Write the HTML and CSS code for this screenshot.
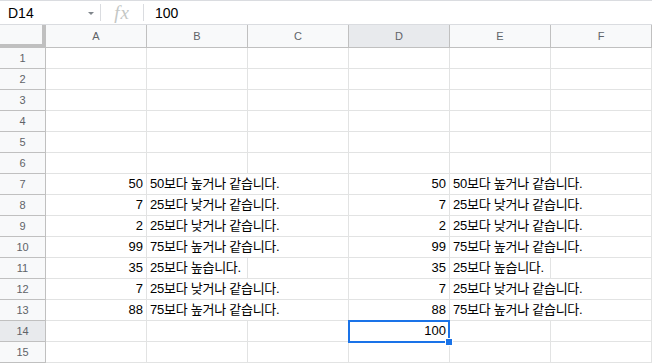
FILE: index.html
```html
<!DOCTYPE html>
<html>
<head>
<meta charset="utf-8">
<link rel="stylesheet" href="styles.css">
</head>
<body>
<div class="fbar">
  <div class="namebox"><span class="ref">D14</span><span class="caret"></span></div>
  <div class="sep"></div>
  <div class="fx">fx</div>
  <div class="sep"></div>
  <div class="fval">100</div>
</div>
<div class="grid">
  <div class="corner"></div>
  <div class="ch">A</div><div class="ch">B</div><div class="ch">C</div><div class="ch sel">D</div><div class="ch">E</div><div class="ch">F</div>

  <div class="rh">1</div><div class="c"></div><div class="c"></div><div class="c"></div><div class="c"></div><div class="c"></div><div class="c"></div>
  <div class="rh">2</div><div class="c"></div><div class="c"></div><div class="c"></div><div class="c"></div><div class="c"></div><div class="c"></div>
  <div class="rh">3</div><div class="c"></div><div class="c"></div><div class="c"></div><div class="c"></div><div class="c"></div><div class="c"></div>
  <div class="rh">4</div><div class="c"></div><div class="c"></div><div class="c"></div><div class="c"></div><div class="c"></div><div class="c"></div>
  <div class="rh">5</div><div class="c"></div><div class="c"></div><div class="c"></div><div class="c"></div><div class="c"></div><div class="c"></div>
  <div class="rh">6</div><div class="c"></div><div class="c"></div><div class="c"></div><div class="c"></div><div class="c"></div><div class="c"></div>

  <div class="rh">7</div><div class="c num">50</div><div class="c txt span2">50보다 높거나 같습니다.</div><div class="c num">50</div><div class="c txt span2">50보다 높거나 같습니다.</div>
  <div class="rh">8</div><div class="c num">7</div><div class="c txt span2">25보다 낮거나 같습니다.</div><div class="c num">7</div><div class="c txt span2">25보다 낮거나 같습니다.</div>
  <div class="rh">9</div><div class="c num">2</div><div class="c txt span2">25보다 낮거나 같습니다.</div><div class="c num">2</div><div class="c txt span2">25보다 낮거나 같습니다.</div>
  <div class="rh">10</div><div class="c num">99</div><div class="c txt span2">75보다 높거나 같습니다.</div><div class="c num">99</div><div class="c txt span2">75보다 높거나 같습니다.</div>
  <div class="rh">11</div><div class="c num">35</div><div class="c txt">25보다 높습니다.</div><div class="c"></div><div class="c num">35</div><div class="c txt">25보다 높습니다.</div><div class="c"></div>
  <div class="rh">12</div><div class="c num">7</div><div class="c txt span2">25보다 낮거나 같습니다.</div><div class="c num">7</div><div class="c txt span2">25보다 낮거나 같습니다.</div>
  <div class="rh">13</div><div class="c num">88</div><div class="c txt span2">75보다 높거나 같습니다.</div><div class="c num">88</div><div class="c txt span2">75보다 높거나 같습니다.</div>
  <div class="rh sel">14</div><div class="c"></div><div class="c"></div><div class="c"></div><div class="c num active">100<span class="handle"></span></div><div class="c"></div><div class="c"></div>
  <div class="rh">15</div><div class="c"></div><div class="c"></div><div class="c"></div><div class="c"></div><div class="c"></div><div class="c"></div>
</div>
</body>
</html>
```
FILE: styles.css
```css
html, body {
  margin: 0;
  padding: 0;
  background: #fff;
  overflow: hidden;
}
body {
  width: 652px;
  height: 364px;
  font-family: "Liberation Sans", Arial, "Noto Sans CJK KR", sans-serif;
  color: #000;
}
.fbar {
  height: 23px;
  border-top: 1px solid #dadce0;
  border-bottom: 1px solid #dadce0;
  display: flex;
  align-items: center;
}
.namebox {
  width: 100px;
  display: flex;
  align-items: center;
  justify-content: space-between;
  padding: 0 6px 0 8px;
  box-sizing: border-box;
  font-size: 14px;
}
.caret {
  width: 0;
  height: 0;
  border-left: 3px solid transparent;
  border-right: 3px solid transparent;
  border-top: 3px solid #80868b;
  margin-top: 1px;
}
.sep {
  width: 1px;
  height: 17px;
  background: #dadce0;
}
.fx {
  width: 42px;
  text-align: center;
  font-family: "Liberation Serif", "DejaVu Serif", serif;
  font-style: italic;
  font-size: 19px;
  color: #c4c7c5;
  line-height: 23px;
  letter-spacing: 1px;
}
.fval {
  padding-left: 11px;
  font-size: 14px;
}
.grid {
  display: grid;
  grid-template-columns: 46px repeat(6, 101px);
  grid-template-rows: 23px repeat(15, 21px);
}
.corner {
  background: #f8f9fa;
  border-right: 4px solid #c0c0c0;
  border-bottom: 4px solid #c0c0c0;
  box-sizing: border-box;
}
.ch {
  background: #f8f9fa;
  border-right: 1px solid #c0c0c0;
  border-bottom: 1px solid #c0c0c0;
  box-sizing: border-box;
  color: #5f6368;
  font-size: 11px;
  display: flex;
  align-items: center;
  justify-content: center;
}
.ch.sel, .rh.sel {
  background: #e8eaed;
}
.rh {
  background: #f8f9fa;
  border-right: 1px solid #c0c0c0;
  border-bottom: 1px solid #c0c0c0;
  box-sizing: border-box;
  color: #5f6368;
  font-size: 11px;
  display: flex;
  align-items: center;
  justify-content: center;
}
.c {
  border-right: 1px solid #e2e3e3;
  border-bottom: 1px solid #e2e3e3;
  box-sizing: border-box;
  font-size: 13px;
  line-height: 20px;
  padding: 0 3px;
  white-space: nowrap;
  position: relative;
}
.num {
  text-align: right;
}
.txt {
  letter-spacing: -0.25px;
}
.span2 {
  grid-column: span 2;
}
.active {
  border: 2px solid #1a73e8;
  margin: -1px 0 -1px -1px;
  line-height: 18px;
  padding-right: 2px;
  z-index: 2;
}
.handle {
  position: absolute;
  right: -5px;
  bottom: -5px;
  width: 6px;
  height: 6px;
  background: #1a73e8;
  border: 1px solid #fff;
  z-index: 3;
}
```
